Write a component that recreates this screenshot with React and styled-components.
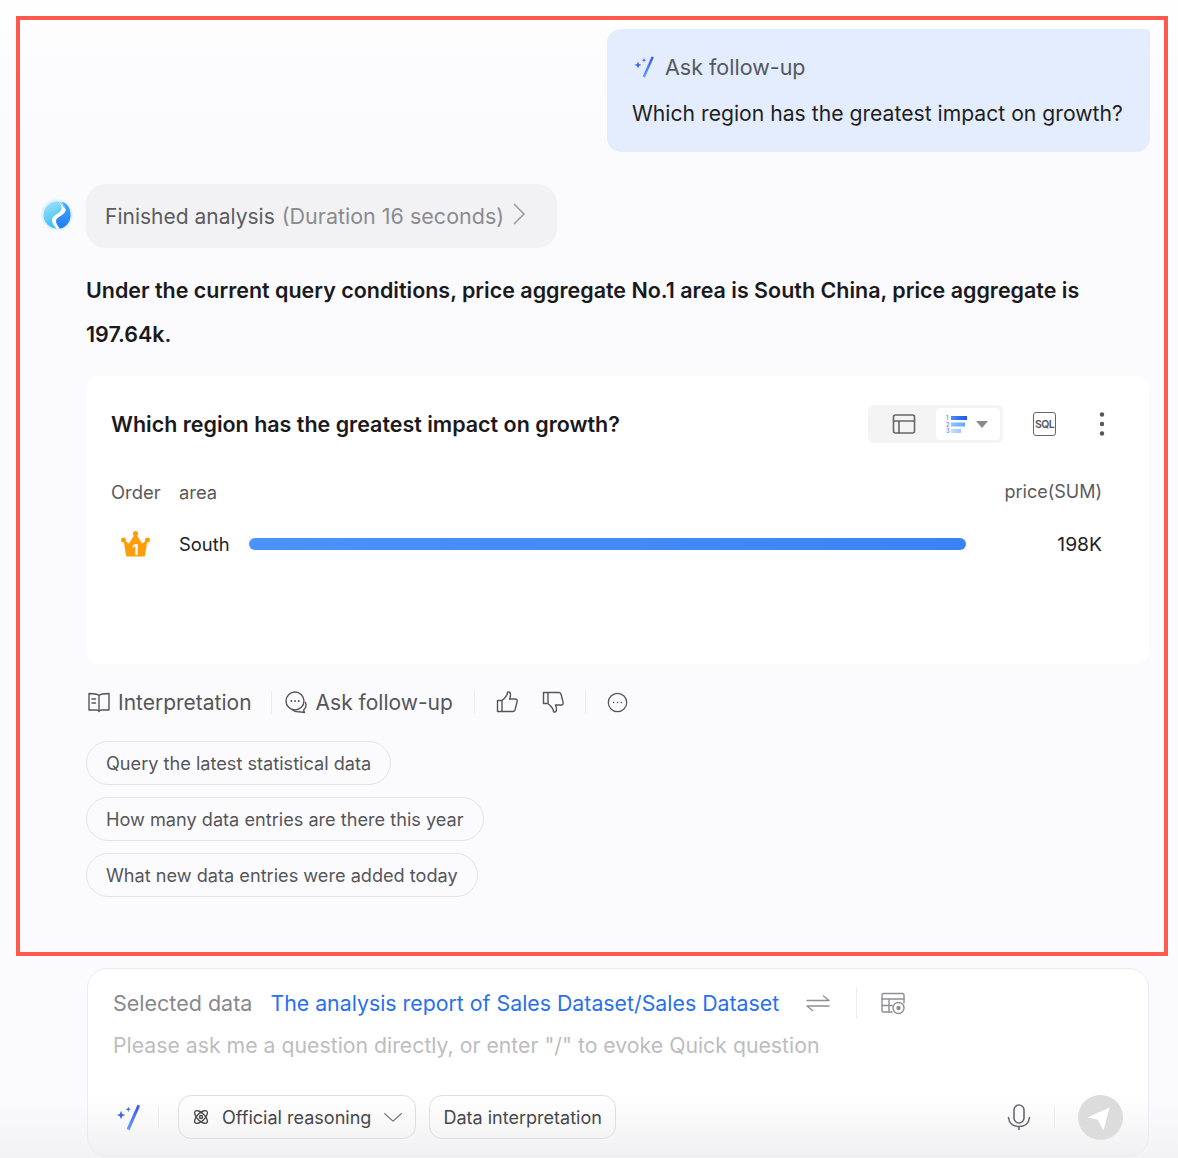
import React from "react";
import styled, { createGlobalStyle } from "styled-components";

const Global = createGlobalStyle`
  html, body { margin: 0; padding: 0; }
  body {
    width: 1178px; height: 1158px; overflow: hidden;
    background: linear-gradient(#fefefe 0, #fbfbfe 130px, #fbfbfe 1100px, #f3f3f6 1158px);
    font-family: Inter, "Liberation Sans", sans-serif;
    color: #1f1f22;
    -webkit-font-smoothing: antialiased;
  }
  * { box-sizing: border-box; }
`;

const Page = styled.div`
  width: 1178px; height: 1158px; overflow: hidden;
  padding: 16px 10px 0 16px;
`;
const Frame = styled.section`
  height: 940px;
  border: 4px solid #fb5a4d;
  padding: 9px 14px 0 0;
`;
const UserRow = styled.div`display: flex; justify-content: flex-end;`;
const Bubble = styled.div`
  width: 543px; height: 123px;
  background: #e3edfe;
  border-radius: 14px 4px 14px 14px;
  padding: 26px 0 0 25px;
`;
const BubbleHead = styled.div`
  display: flex; align-items: center; gap: 8px;
  height: 24px; font-size: 21.5px; line-height: 24px; color: #55585f;
`;
const BubbleText = styled.div`
  margin-top: 22px; font-size: 21.17px; line-height: 24px; color: #1f1f22; white-space: nowrap;
`;
const StatusRow = styled.div`
  display: flex; align-items: flex-start; gap: 13px;
  margin-top: 32px; padding-left: 21px;
`;
const Avatar = styled.svg`width: 32px; height: 32px; margin-top: 15px; flex: none;`;
const StatusPill = styled.div`
  width: 471px; height: 64px;
  border-radius: 20px; background: #f2f2f4;
  display: flex; align-items: center; padding-left: 19px;
  font-size: 21px; color: #5c5c60; white-space: nowrap;
`;
const Muted = styled.span`color: #8b8b8f; margin-left: 7px; font-size: 21.5px;`;
const Chevron = styled.svg`width: 14px; height: 24px; margin-left: 8px; margin-top: -5px;`;
const Body = styled.div`margin-left: 66px;`;
const Answer = styled.p`
  margin: 20px 0 0; width: 1020px;
  font-size: 21.48px; line-height: 44px; font-weight: 600; color: #1a1a1d;
`;
const Card = styled.div`
  margin-top: 20px; height: 288px; width: 1063px;
  background: #fff; border-radius: 12px;
  padding: 29px 47px 0 25px;
`;
const TitleRow = styled.div`display: flex; align-items: center; height: 38px;`;
const CardTitle = styled.h3`
  flex: 1; margin: 0; font-size: 21.48px; font-weight: 600; color: #1a1a1d; white-space: nowrap;
`;
const Toggle = styled.div`
  width: 135px; height: 38px; border-radius: 6px; background: #f4f4f4;
  display: flex; align-items: center; padding: 3px;
`;
const ToggleOff = styled.div`flex: 1; display: flex; justify-content: center;`;
const ToggleOn = styled.div`
  width: 64px; height: 32px; border-radius: 5px; background: #fff;
  display: flex; align-items: center; gap: 9px; padding-left: 10px;
`;
const Caret = styled.span`
  width: 0; height: 0;
  border-left: 6px solid transparent; border-right: 6px solid transparent;
  border-top: 7px solid #8a8a8a;
`;
const SqlBox = styled.span`
  margin-left: 30px; width: 23px; height: 24px;
  border: 1.6px solid #666; border-radius: 3px;
  display: flex; align-items: center; justify-content: center;
  font-size: 10.5px; font-weight: 600; color: #555; letter-spacing: -0.6px;
`;
const Dots = styled.svg`width: 6px; height: 24px; margin-left: 43px; margin-right: -3px;`;
const RankGrid = styled.div`
  display: grid; grid-template-columns: 68px 70px 717px 1fr; grid-template-rows: 24px; align-items: center;
  height: 24px; margin-top: ${p => p.$top}px;
  font-size: 18.4px; line-height: 24px; color: ${p => p.$head ? "#5a5a5e" : "#222225"};
`;
const RightCell = styled.div`
  text-align: right; grid-column: 4;
  font-size: ${p => p.$size}px;
`;
const Crown = styled.svg`width: 30px; height: 28px; margin-left: 9px; margin-top: -1px;`;
const Track = styled.div`height: 12px; border-radius: 6px; background: linear-gradient(90deg, #4c92fa, #3b82f6);`;
const Actions = styled.div`
  display: flex; align-items: center; height: 24px; margin-top: 26px;
  font-size: 21px; color: #55555a;
`;
const ActionBtn = styled.span`display: flex; align-items: center; gap: ${p => p.$gap || 7}px; white-space: nowrap;`;
const Sep = styled.i`
  width: 1px; height: ${p => p.$h || 22}px; background: #ececef; flex: none;
  margin: 0 ${p => p.$r ?? 20}px 0 ${p => p.$l ?? 20}px;
`;
const Icon = styled.svg`
  flex: none; width: ${p => p.$s || 24}px; height: ${p => p.$s || 24}px;
  margin-left: ${p => p.$ml || 0}px; margin-right: ${p => p.$mr || 0}px;
  fill: none; stroke: ${p => p.$c || "#55555a"}; stroke-width: ${p => p.$w || 1.4}; stroke-linecap: round; stroke-linejoin: round;
`;
const Chips = styled.div`display: flex; flex-direction: column; align-items: flex-start; gap: 12.5px; margin-top: 27px;`;
const Chip = styled.div`
  height: 43.7px; border: 1px solid #e3e3e7; border-radius: 22px;
  padding: 0 19px; display: flex; align-items: center;
  font-size: 18.15px; color: #56565a; white-space: nowrap;
`;
const Composer = styled.div`
  margin: 12px 0 0 71px; width: 1062px; height: 189px;
  border: 1px solid #ebebf0; border-radius: 20px;
  background: linear-gradient(#fff 0, #fff 125px, #f0f0f2 189px);
  padding: 22px 25px 0 25px;
`;
const DataRow = styled.div`display: flex; align-items: center; height: 24px; font-size: 21.5px; white-space: nowrap;`;
const DataLabel = styled.span`color: #88888c;`;
const DataLink = styled.span`color: #2a6ff0; margin-left: 18px; font-size: 21.32px;`;
const Placeholder = styled.div`margin-top: 18px; height: 24px; line-height: 24px; font-size: 21.26px; color: #bdbdc0; white-space: nowrap;`;
const BottomRow = styled.div`display: flex; align-items: center; height: 44px; margin-top: 38px;`;
const Pill = styled.div`
  height: 44px; border: 1px solid #dededf; border-radius: 13px;
  display: flex; align-items: center; gap: ${p => p.$gap || 0}px; padding: 0 13px;
  font-size: 18.05px; color: #47474b; white-space: nowrap;
  margin-left: ${p => p.$ml}px;
`;
const Spacer = styled.div`flex: 1;`;
const Send = styled.div`
  width: 45px; height: 45px; border-radius: 50%; background: #dcdcdc;
  display: flex; align-items: center; justify-content: center;
`;

const Wand = ({ s = 24, ml = 0 }) => (
  <svg width={s} height={s} viewBox="0 0 24 24" style={{ flex: "none", marginLeft: ml }}>
    <defs>
      <linearGradient id={`w${s}`} x1="0" y1="1" x2="0.6" y2="0">
        <stop offset="0" stopColor="#6aa4ff" />
        <stop offset="1" stopColor="#3d5cf0" />
      </linearGradient>
    </defs>
    <path d="M18.6 1.5 20.8 2.3 12 22.6 9.6 21.6Z" fill={`url(#w${s})`} />
    <path d="M5 6.5 6 9 8.5 10 6 11 5 13.5 4 11 1.5 10 4 9Z" fill="#3f66f2" />
    <path d="M11 3 11.6 4.6 13.2 5.2 11.6 5.8 11 7.4 10.4 5.8 8.8 5.2 10.4 4.6Z" fill="#3f66f2" />
  </svg>
);

export default function App() {
  return (
    <>
      <Global />
      <Page>
        <Frame>
          <UserRow>
            <Bubble>
              <BubbleHead><Wand ml={1} />Ask follow-up</BubbleHead>
              <BubbleText>Which region has the greatest impact on growth?</BubbleText>
            </Bubble>
          </UserRow>
          <StatusRow>
            <Avatar viewBox="0 0 32 32">
              <defs>
                <linearGradient id="av1" x1="0" y1="0" x2="0.5" y2="1">
                  <stop offset="0" stopColor="#a8e4f9" />
                  <stop offset="1" stopColor="#2dbcf5" />
                </linearGradient>
                <linearGradient id="av2" x1="0.5" y1="0" x2="0.5" y2="1">
                  <stop offset="0" stopColor="#45a4f8" />
                  <stop offset="1" stopColor="#1f7ef2" />
                </linearGradient>
              </defs>
              <circle cx="16" cy="16" r="15.8" fill="#e3f3fd" />
              <circle cx="16" cy="16" r="13.5" fill="url(#av1)" />
              <path d="M18 2.800C20 6 21.500 9 20 11.500 18 15 11 16 11 21 11 25 14 28 16 30L22 28 26 12Z" fill="#fff" />
              <path d="M21 3C24 7 26 10 24 13 22 17 15 18 15 22 15 25 17 27 19 29.500 26 28.500 29.500 22 29.500 16 29.500 9 26 4 21 3Z" fill="url(#av2)" />
            </Avatar>
            <StatusPill>
              Finished analysis<Muted>(Duration 16 seconds)</Muted>
              <Chevron viewBox="0 0 14 24" fill="none" stroke="#9a9a9e" strokeWidth="1.5"><path d="M2 2 12 12 2 22" /></Chevron>
            </StatusPill>
          </StatusRow>
          <Body>
            <Answer>Under the current query conditions, price aggregate No.1 area is South China, price aggregate is 197.64k.</Answer>
            <Card>
              <TitleRow>
                <CardTitle>Which region has the greatest impact on growth?</CardTitle>
                <Toggle>
                  <ToggleOff>
                    <Icon $s={24} $w={1.6} viewBox="0 0 24 24" $c="#666">
                      <rect x="1.500" y="3" width="21" height="18" rx="2" />
                      <path d="M1.500 9h21M7 9v12" />
                    </Icon>
                  </ToggleOff>
                  <ToggleOn>
                    <svg width="21" height="18" viewBox="0 0 21 18" style={{ flex: "none" }}>
                      <defs>
                        <linearGradient id="bar1"><stop offset="0" stopColor="#4d8df7" /><stop offset="1" stopColor="#1f55ec" /></linearGradient>
                        <linearGradient id="bar2"><stop offset="0" stopColor="#8cc6fb" /><stop offset="1" stopColor="#5ea8fa" /></linearGradient>
                        <linearGradient id="bar3"><stop offset="0" stopColor="#c4e0fc" /><stop offset="1" stopColor="#9ccafb" /></linearGradient>
                      </defs>
                      <rect x="5" y="1" width="16" height="4" fill="url(#bar1)" />
                      <rect x="5" y="7.500" width="14" height="4" fill="url(#bar2)" />
                      <rect x="5" y="14" width="10" height="4" fill="url(#bar3)" />
                      <text x="0" y="5" fontSize="5.500" fontWeight="600" fill="#5d8ff5" fontFamily="Inter, sans-serif">1</text>
                      <text x="0" y="11.500" fontSize="5.500" fontWeight="600" fill="#5d8ff5" fontFamily="Inter, sans-serif">2</text>
                      <text x="0" y="18" fontSize="5.500" fontWeight="600" fill="#5d8ff5" fontFamily="Inter, sans-serif">3</text>
                    </svg>
                    <Caret />
                  </ToggleOn>
                </Toggle>
                <SqlBox>SQL</SqlBox>
                <Dots viewBox="0 0 6 24">
                  <circle cx="3" cy="2.500" r="2.200" fill="#555" />
                  <circle cx="3" cy="12" r="2.200" fill="#555" />
                  <circle cx="3" cy="21.500" r="2.200" fill="#555" />
                </Dots>
              </TitleRow>
              <RankGrid $head $top={37}>
                <div>Order</div>
                <div>area</div>
                <RightCell $size={18}>price(SUM)</RightCell>
              </RankGrid>
              <RankGrid $top={28}>
                <Crown viewBox="0 0 30 28">
                  <path d="M3.500 10 9 13.500 15.500 3 22 13.500 27.500 10 25 25.500Q24.900 26.500 24 26.500H7Q6.100 26.500 6 25.500Z" fill="#ff9d0b" />
                  <circle cx="15.500" cy="3.500" r="2.600" fill="#ff9d0b" />
                  <circle cx="3.500" cy="10" r="2.500" fill="#ff9d0b" />
                  <circle cx="27.500" cy="10" r="2.500" fill="#ff9d0b" />
                  <text x="15.500" y="25" textAnchor="middle" fontSize="15" fontWeight="700" fill="#fff" fontFamily="Inter, sans-serif">1</text>
                </Crown>
                <div>South</div>
                <Track />
                <RightCell $size={19.3}>198K</RightCell>
              </RankGrid>
            </Card>
            <Actions>
              <ActionBtn>
                <Icon viewBox="0 0 24 24" $ml={1}>
                  <path d="M12 5.500C10.500 4 8 3.500 2 3.500V20H9.500C10.500 20 11.500 20.500 12 21.500 12.500 20.500 13.500 20 14.500 20H22V3.500C16 3.500 13.500 4 12 5.500ZM12 5.500V21" />
                  <path d="M5 9h3.500M5 13h3.500" />
                </Icon>
                Interpretation
              </ActionBtn>
              <Sep $l={19} $r={12} />
              <ActionBtn $gap={8}>
                <Icon viewBox="0 0 24 24">
                  <circle cx="11" cy="11" r="9" />
                  <path d="M21.500 12.500C23 16 21 19 19.500 20L20.500 22.500 15 21.800C12.500 22 10.500 21.500 8.500 20" />
                  <path d="M7.300 11h.1M11 11h.1M14.700 11h.1" strokeWidth="1.800" />
                </Icon>
                Ask follow-up
              </ActionBtn>
              <Sep $l={21} $r={19} />
              <Icon viewBox="0 0 24 24" $ml={1}>
                <path d="M7 10.500V21.500H2.500V10.500ZM7 10.500C10 8 12.500 6 12.500 2.500 12.500 1.500 15.500 1.500 15.500 4.500 15.500 6.500 15 8 14.500 9H20C22 9 22.500 10.500 22 12L20 20C19.500 21 19 21.500 18 21.500H7" />
              </Icon>
              <Icon viewBox="0 0 24 24" $ml={22}>
                <path d="M7 13.500V2.500H2.500V13.500ZM7 13.500C10 16 12.500 18 12.500 21.500 12.500 22.500 15.500 22.500 15.500 19.500 15.500 17.500 15 16 14.500 15H20C22 15 22.500 13.500 22 12L20 4C19.500 3 19 2.500 18 2.500H7" />
              </Icon>
              <Sep $l={20} />
              <Icon viewBox="0 0 24 24" $s={21} $ml={1}>
                <circle cx="12" cy="12" r="10.500" />
                <path d="M7.500 12h.1M12 12h.1M16.500 12h.1" strokeWidth="1.800" />
              </Icon>
            </Actions>
            <Chips>
              <Chip>Query the latest statistical data</Chip>
              <Chip>How many data entries are there this year</Chip>
              <Chip>What new data entries were added today</Chip>
            </Chips>
          </Body>
        </Frame>
        <Composer>
          <DataRow>
            <DataLabel>Selected data</DataLabel>
            <DataLink>The analysis report of Sales Dataset/Sales Dataset</DataLink>
            <Icon viewBox="0 0 24 24" $ml={27} $c="#8f8f93">
              <path d="M1 9.500H23L17.500 5M23 15H1L6.500 19.500" />
            </Icon>
            <Sep $l={26} $r={24} $h={32} />
            <Icon viewBox="0 0 24 24" $c="#8f8f93">
              <path d="M11 21H2.500C1.500 21 1 20.500 1 19.500V4C1 3 1.500 2.500 2.500 2.500H21.500C22.500 2.500 23 3 23 4V12" />
              <path d="M1 8H23M8 8V21M1 14.500H11" />
              <circle cx="17.500" cy="17" r="5.500" />
              <circle cx="17.500" cy="17" r="1.500" fill="#8f8f93" />
            </Icon>
          </DataRow>
          <Placeholder>Please ask me a question directly, or enter "/" to evoke Quick question</Placeholder>
          <BottomRow>
            <Wand s={29} ml={2} />
            <Sep $l={14} $r={0} $h={22} />
            <Pill $ml={19} $gap={12}>
              <Icon viewBox="0 0 24 24" $s={18} $c="#47474b" $w={1.8}>
                <ellipse cx="12" cy="12" rx="11" ry="5" transform="rotate(45 12 12)" />
                <ellipse cx="12" cy="12" rx="11" ry="5" transform="rotate(-45 12 12)" />
                <circle cx="12" cy="12" r="2" />
              </Icon>
              Official reasoning
              <Icon viewBox="0 0 24 24" $s={20} $c="#6a6a6e" $ml={0} $mr={-1}><path d="M2 8 12 17 22 8" /></Icon>
            </Pill>
            <Pill $ml={13}>Data interpretation</Pill>
            <Spacer />
            <Icon viewBox="0 0 24 28" $s={28} $c="#6a6a6e" $w={1.6}>
              <rect x="7" y="2" width="10" height="18" rx="5" />
              <path d="M1.500 14.500C2 20 6 23.500 12 23.500S22 20 22.500 14.500M12 23.500V26.500" />
            </Icon>
            <Sep $l={21} $r={23} $h={22} />
            <Send>
              <svg width="28" height="28" viewBox="0 0 28 28"><path d="M22.500 4.500 0.500 14.500 10.500 16.500 16.500 27.500Z" fill="#fff" /></svg>
            </Send>
          </BottomRow>
        </Composer>
      </Page>
    </>
  );
}
